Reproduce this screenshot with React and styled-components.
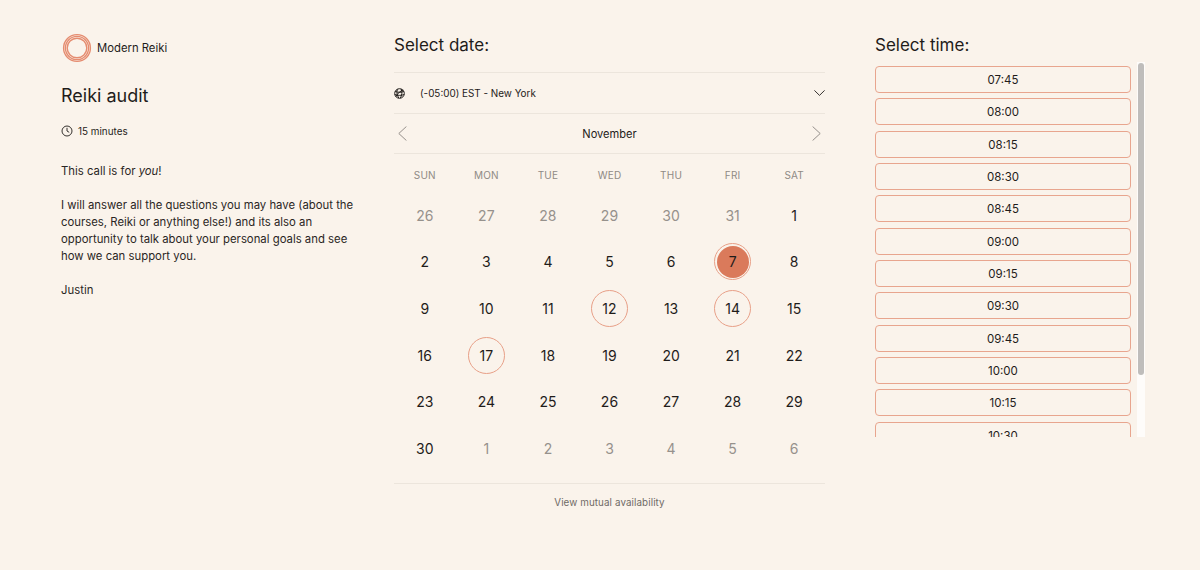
import React from 'react';
import styled, { createGlobalStyle } from 'styled-components';

const GlobalStyle = createGlobalStyle`
  body {
    margin: 0;
    background: #faf3eb;
    color: #1f1c1a;
    font-family: Inter, "Liberation Sans", sans-serif;
  }
`;

const Page = styled.div`
  display: grid;
  grid-template-columns: 333px 431px 320px;
  height: 570px;
  box-sizing: border-box;
  padding-left: 61px;
  padding-top: 33px;
`;

const Info = styled.div`
  display: flex;
  flex-direction: column;
`;

const Brand = styled.div`
  display: flex;
  align-items: center;
  gap: 5px;
  height: 29px;
  padding-left: 1px;
  font-size: 11.3px;
`;

const Title = styled.h1`
  margin: 23px 0 0;
  font-size: 18px;
  line-height: 22px;
  font-weight: 400;
`;

const Duration = styled.div`
  display: flex;
  align-items: center;
  gap: 5px;
  margin-top: 17px;
  height: 14px;
  font-size: 9.9px;
`;

const Description = styled.div`
  width: 300px;
  margin-top: 25px;
  font-size: 11.35px;
  line-height: 17px;
  color: #2a2624;

  p {
    margin: 0 0 17px;
  }
`;

const DateColumn = styled.div`
  display: flex;
  flex-direction: column;
`;

const Heading = styled.h2`
  margin: 0;
  height: 39px;
  font-size: 17px;
  line-height: 24px;
  font-weight: 400;
`;

const ZoneRow = styled.div`
  display: flex;
  align-items: center;
  justify-content: space-between;
  height: 40px;
  border-top: 1px solid #ece5dc;
  border-bottom: 1px solid #ece5dc;
  font-size: 9.9px;
`;

const ZoneLabel = styled.span`
  display: flex;
  align-items: center;
  gap: 15px;
`;

const MonthRow = styled.div`
  display: flex;
  align-items: center;
  justify-content: space-between;
  height: 39px;
  padding: 0 4px;
  border-bottom: 1px solid #ece5dc;
  font-size: 11.1px;
`;

const WeekRow = styled.div`
  display: grid;
  grid-template-columns: repeat(7, 1fr);
  height: 38px;
  align-items: center;
  margin-top: 2px;
`;

const WeekDay = styled.span`
  text-align: center;
  font-size: 10px;
  letter-spacing: 0.2px;
  color: #8f8a85;
`;

const DayGrid = styled.div`
  display: grid;
  grid-template-columns: repeat(7, 1fr);
  grid-auto-rows: 46.6px;
  justify-items: center;
  align-items: center;
  margin-top: -2px;
  padding-bottom: 11px;
  border-bottom: 1px solid #ece5dc;
`;

const Day = styled.span`
  display: flex;
  align-items: center;
  justify-content: center;
  width: 37px;
  height: 37px;
  box-sizing: border-box;
  border-radius: 50%;
  font-size: 14px;
  color: ${(p) => (p.$muted ? '#96918c' : '#1f1c1a')};
  border: 1px solid ${(p) => (p.$open ? '#e8a088' : 'transparent')};
  background: ${(p) => (p.$selected ? '#da7a5b' : 'transparent')};
  background-clip: content-box;
  padding: ${(p) => (p.$selected ? '1.5px' : '0')};
`;

const Mutual = styled.div`
  margin-top: 12px;
  text-align: center;
  font-size: 9.8px;
  line-height: 14px;
  letter-spacing: 0.1px;
  color: #6f6a66;
`;

const TimeColumn = styled.div`
  display: flex;
  flex-direction: column;
  padding-left: 50px;
`;

const TimeHeading = styled(Heading)`
  height: 29px;
`;

const TimePanel = styled.div`
  display: flex;
  gap: 6px;
  height: 375px;
`;

const TimeList = styled.div`
  display: flex;
  flex-direction: column;
  gap: 5.33px;
  flex: 0 0 256px;
  box-sizing: border-box;
  padding-top: 4px;
  overflow: hidden;
`;

const TimeSlot = styled.button`
  flex: 0 0 27px;
  width: 256px;
  padding: 1px 0 0;
  box-sizing: border-box;
  border: 1px solid #e8a58e;
  border-radius: 4px;
  background: transparent;
  color: #1f1c1a;
  font-family: inherit;
  font-size: 11.5px;
`;

const ScrollTrack = styled.div`
  flex: 0 0 8px;
  height: 100%;
  background: #fefcfa;
`;

const ScrollThumb = styled.div`
  width: 6px;
  height: 312px;
  margin: 1px 1px 0;
  background: #bfbdbb;
  border-radius: 3px;
`;

const weekDays = ['SUN', 'MON', 'TUE', 'WED', 'THU', 'FRI', 'SAT'];

const days = [
  ...[26, 27, 28, 29, 30, 31].map((d) => ({ d, muted: true })),
  ...Array.from({ length: 30 }, (_, i) => ({ d: i + 1 })),
  ...[1, 2, 3, 4, 5, 6].map((d) => ({ d, muted: true })),
];

const openDays = [7, 12, 14, 17];

const times = [
  '07:45', '08:00', '08:15', '08:30', '08:45', '09:00',
  '09:15', '09:30', '09:45', '10:00', '10:15', '10:30',
];

function Logo() {
  return (
    <svg width="30" height="30" viewBox="0 0 30 30" fill="none" stroke="#e58c70" strokeWidth="1.4">
      <circle cx="15" cy="15" r="13.4" />
      <circle cx="15" cy="15" r="11.6" />
      <circle cx="15" cy="15" r="9.8" />
    </svg>
  );
}

function Clock() {
  return (
    <svg width="12" height="12" viewBox="0 0 12 12" fill="none" stroke="#1f1c1a" strokeWidth="0.9">
      <circle cx="6" cy="6" r="5" />
      <path d="M6 2.8V6l2.2 1.3" />
    </svg>
  );
}

function Globe() {
  return (
    <svg width="11" height="11" viewBox="0 0 11 11" fill="none" stroke="#1f1c1a" strokeWidth="1">
      <circle cx="5.5" cy="5.5" r="4.8" />
      <path d="M1.2 3.4c3 1.2 6 1.2 8.6 0M.8 6.6c3.2 1 6.4 1 9.4 0M3.4 1.2c-1 3-.4 6.2 1.4 8.8M7.2 1c1.2 3 .8 6.2-.8 9M1.8 8.6c1.8-3 4.4-5.8 7.4-6.6" />
    </svg>
  );
}

function ArrowDown() {
  return (
    <svg width="11" height="6" viewBox="0 0 11 6" fill="none" stroke="#1f1c1a" strokeWidth="0.9">
      <path d="M.4.4 5.5 5.4 10.6.4" />
    </svg>
  );
}

function ArrowSide({ flip }) {
  return (
    <svg width="9" height="15" viewBox="0 0 9 15" fill="none" stroke="#8a8580" strokeWidth="0.9">
      <path d={flip ? 'M.6.5 8.2 7.5.6 14.5' : 'M8.4.5.8 7.5 8.4 14.5'} />
    </svg>
  );
}

export default function App() {
  return (
    <>
      <GlobalStyle />
      <Page>
        <Info>
          <Brand>
            <Logo />
            Modern Reiki
          </Brand>
          <Title>Reiki audit</Title>
          <Duration>
            <Clock />
            15 minutes
          </Duration>
          <Description>
            <p>This call is for <em>you</em>!</p>
            <p>
              I will answer all the questions you may have (about the courses, Reiki or anything
              else!) and its also an opportunity to talk about your personal goals and see how we
              can support you.
            </p>
            <p>Justin</p>
          </Description>
        </Info>

        <DateColumn>
          <Heading>Select date:</Heading>
          <ZoneRow>
            <ZoneLabel>
              <Globe />
              (-05:00) EST - New York
            </ZoneLabel>
            <ArrowDown />
          </ZoneRow>
          <MonthRow>
            <ArrowSide />
            November
            <ArrowSide flip />
          </MonthRow>
          <WeekRow>
            {weekDays.map((w) => (
              <WeekDay key={w}>{w}</WeekDay>
            ))}
          </WeekRow>
          <DayGrid>
            {days.map(({ d, muted }, i) => (
              <Day
                key={i}
                $muted={muted}
                $open={!muted && openDays.includes(d)}
                $selected={!muted && d === 7}
              >
                {d}
              </Day>
            ))}
          </DayGrid>
          <Mutual>View mutual availability</Mutual>
        </DateColumn>

        <TimeColumn>
          <TimeHeading>Select time:</TimeHeading>
          <TimePanel>
            <TimeList>
              {times.map((t) => (
                <TimeSlot key={t}>{t}</TimeSlot>
              ))}
            </TimeList>
            <ScrollTrack>
              <ScrollThumb />
            </ScrollTrack>
          </TimePanel>
        </TimeColumn>
      </Page>
    </>
  );
}
